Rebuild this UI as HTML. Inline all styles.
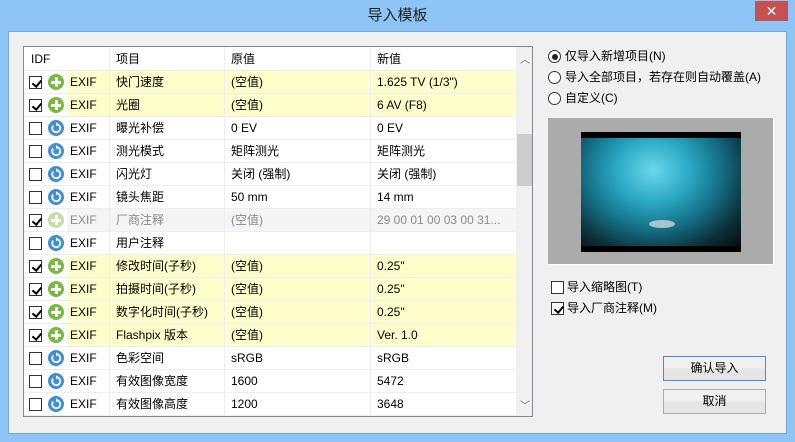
<!DOCTYPE html>
<html><head><meta charset="utf-8"><style>
*{margin:0;padding:0;box-sizing:border-box}
body{width:795px;height:442px;background:#8cc5f6;position:relative;overflow:hidden;font-family:"Liberation Sans","Noto Sans CJK SC",sans-serif;font-size:12px;color:#000;line-height:16px}
.abs{position:absolute}
.title{left:0;top:6px;width:795px;text-align:center;font-size:15px;color:#222;line-height:20px}
.close{left:755px;top:1px;width:33px;height:20px;background:#c75050;color:#fff;text-align:center;font-size:14px;line-height:20px}
.client{left:8px;top:31px;width:779px;height:403px;background:#f0f0f0;border:1px solid #7aa6cf}
.tbl{left:23px;top:46px;width:510px;height:371px;border:1px solid #828790;background:#fff;overflow:hidden}
.row{position:absolute;left:0;width:492px;height:23px;border-bottom:1px solid #ebeef2}
.row span{position:absolute;top:0;line-height:22px;height:22px;white-space:nowrap}
.cb{position:absolute;left:5px;top:5px;width:13px;height:13px;border:1px solid #333;background:#fff}
.cb.c::after{content:"";position:absolute;left:3.5px;top:0.5px;width:3.5px;height:7px;border:solid #000;border-width:0 2px 2px 0;transform:rotate(40deg)}
.ic{position:absolute;left:24px;top:3px;width:16px;height:16px;border-radius:50%}
.g{background:#78b843}.g::before{content:"";position:absolute;left:3px;top:6.5px;width:10px;height:3px;background:#fff}.g::after{content:"";position:absolute;left:6.5px;top:3px;width:3px;height:10px;background:#fff}
.b{background:#3e8fd4}
.vl{position:absolute;top:0;width:1px;height:100%;background:#ebeef2}
.sb{left:492px;top:0;width:17px;height:369px;background:#f0f0f0}
.radio{position:absolute;width:13px;height:13px;border:1px solid #333;border-radius:50%;background:#fff}
.btn{position:absolute;left:663px;width:103px;height:25px;border:1px solid #adadad;background:linear-gradient(#f0f0f0 50%,#e5e5e5 50%);text-align:center;line-height:23px}
</style></head><body>
<div class="abs title">导入模板</div>
<div class="abs close">✕</div>
<div class="abs client"></div>
<div class="abs tbl">
 <div class="row" style="top:0;height:24px;border-bottom:1px solid #e4ecf5"><span style="left:7px;line-height:24px">IDF</span><span style="left:92px;line-height:24px">项目</span><span style="left:207px;line-height:24px">原值</span><span style="left:353px;line-height:24px">新值</span></div>
 <div id="rows"></div>
 <div class="vl" style="left:85px"></div><div class="vl" style="left:200px"></div><div class="vl" style="left:346px"></div>
 <div class="abs sb"><div style="position:absolute;left:4px;top:6px;font-size:10px;color:#606060">︿</div><div style="position:absolute;left:1px;top:87px;width:15px;height:52px;background:#cdcdcd"></div><div style="position:absolute;left:4px;top:352px;font-size:10px;color:#606060">﹀</div></div>
</div>
<div class="radio" style="left:548px;top:50px"><div style="position:absolute;left:2.5px;top:2.5px;width:6px;height:6px;border-radius:50%;background:#222"></div></div>
<span class="abs" style="left:565px;top:48px">仅导入新增项目(N)</span>
<div class="radio" style="left:548px;top:71px"></div><span class="abs" style="left:565px;top:69px">导入全部项目，若存在则自动覆盖(A)</span>
<div class="radio" style="left:548px;top:92px"></div><span class="abs" style="left:565px;top:90px">自定义(C)</span>
<div class="abs" style="left:548px;top:118px;width:226px;height:147px;background:#ababab;border-right:1px solid #fff;border-bottom:1px solid #fff"></div>
<div class="abs" style="left:581px;top:132px;width:160px;height:120px;background:#000"></div>
<div class="abs" style="left:581px;top:138px;width:160px;height:108px;background:radial-gradient(ellipse at 45% 30%,#6ad8ec 0%,#2aa8c4 30%,#146f86 55%,#0a2e36 80%,#050d10 100%)"></div>
<div class="abs" style="left:649px;top:220px;width:26px;height:8px;border-radius:50%;background:#c8d8d8;opacity:.8"></div>
<div class="cb abs" style="left:551px;top:281px"></div><span class="abs" style="left:567px;top:279px">导入缩略图(T)</span>
<div class="cb c abs" style="left:551px;top:302px"></div><span class="abs" style="left:567px;top:300px">导入厂商注释(M)</span>
<div class="btn" style="top:356px;border-color:#3c8fe0">确认导入</div>
<div class="btn" style="top:389px">取消</div>
<script>
var d=[[1,'g','快门速度','(空值)','1.625 TV (1/3")',1],[1,'g','光圈','(空值)','6 AV (F8)',1],[0,'b','曝光补偿','0 EV','0 EV'],[0,'b','测光模式','矩阵测光','矩阵测光'],[0,'b','闪光灯','关闭 (强制)','关闭 (强制)'],[0,'b','镜头焦距','50 mm','14 mm'],[1,'g','厂商注释','(空值)','29 00 01 00 03 00 31...',2],[0,'b','用户注释','',''],[1,'g','修改时间(子秒)','(空值)','0.25"',1],[1,'g','拍摄时间(子秒)','(空值)','0.25"',1],[1,'g','数字化时间(子秒)','(空值)','0.25"',1],[1,'g','Flashpix 版本','(空值)','Ver. 1.0',1],[0,'b','色彩空间','sRGB','sRGB'],[0,'b','有效图像宽度','1600','5472'],[0,'b','有效图像高度','1200','3648']];
var h='';d.forEach(function(r,i){var t=24+i*23;var bg=r[5]==1?'<div style="position:absolute;left:43px;top:0;width:449px;height:22px;background:#ffffcc"></div>':r[5]==2?'<div style="position:absolute;left:43px;top:0;width:449px;height:22px;background:#f5f5f5"></div>':'';var col=r[5]==2?'color:#8a8a8a':'';
var ic=r[1]=='g'?'<div class="ic g" style="'+(r[5]==2?'opacity:.45':'')+'"></div>':'<div class="ic b"><svg width="16" height="16" viewBox="0 0 16 16" style="position:absolute;left:0;top:0"><path d="M5.2 5.6A4 4 0 1 0 8 4.2" fill="none" stroke="#fff" stroke-width="1.8"/><path d="M8 2.2L10.5 4.3 8 6.3Z" fill="#fff"/></svg></div>';
h+='<div class="row" style="top:'+t+'px;'+col+'">'+bg+'<div class="cb'+(r[0]?' c':'')+'"></div>'+ic+'<span style="left:46px">EXIF</span><span style="left:92px">'+r[2]+'</span><span style="left:207px">'+r[3]+'</span><span style="left:353px">'+r[4]+'</span></div>';});
document.getElementById('rows').outerHTML=h;
</script>
</body></html>
